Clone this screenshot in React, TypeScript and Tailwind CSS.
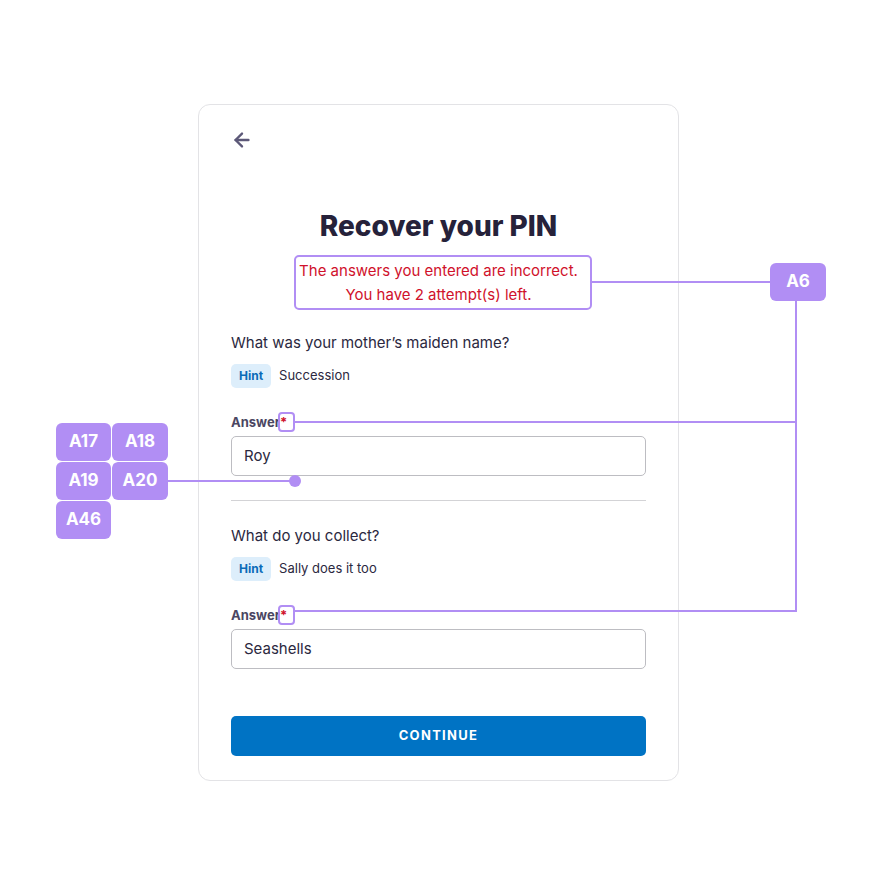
import { ArrowLeft } from 'lucide-react';

const font = { fontFamily: 'Inter, "Liberation Sans", sans-serif' };

function Question({ question, hint, value }: { question: string; hint: string; value: string }) {
  return (
    <div className="flex flex-col">
      <p className="text-[15px] leading-5 text-[#2b2840]">{question}</p>
      <div className="mt-[11px] flex items-center gap-2">
        <span className="flex h-6 items-center rounded-[5px] bg-[#ddeefb] px-2 text-[12px] font-bold text-[#0b6bb8]">Hint</span>
        <span className="text-[13px] text-[#2b2840]">{hint}</span>
      </div>
      <label className="mt-[25px] block text-[13px] font-bold leading-[18px] text-[#4b4662]">
        Answer<span className="text-[#d0112b]">*</span>
      </label>
      <div className="mt-[5px] flex h-10 items-center rounded-[5px] border border-[#bdbdc2] px-3 text-[15px] text-[#2b2840]">
        {value}
      </div>
    </div>
  );
}

function Badge({ label, className }: { label: string; className: string }) {
  return (
    <div className={`absolute flex h-[38px] items-center justify-center rounded-[6px] bg-[#b18ef4] text-[17px] font-bold text-white ${className}`}>
      {label}
    </div>
  );
}

// annotation layer drawn over the form
function Annotations() {
  return (
    <div className="pointer-events-none absolute inset-0">
      <div className="absolute left-[294px] top-[255px] h-[55px] w-[298px] rounded-[5px] border-2 border-[#b18ef4]" />
      <div className="absolute left-[592px] top-[281px] h-[2px] w-[178px] bg-[#b18ef4]" />
      <Badge label="A6" className="left-[770px] top-[263px] w-[56px]" />
      <div className="absolute left-[795px] top-[301px] h-[311px] w-[2px] bg-[#b18ef4]" />
      <div className="absolute left-[278px] top-[412px] h-[20px] w-[17px] rounded-[4px] border-2 border-[#b18ef4]" />
      <div className="absolute left-[295px] top-[421px] h-[2px] w-[501px] bg-[#b18ef4]" />
      <div className="absolute left-[278px] top-[605px] h-[20px] w-[17px] rounded-[4px] border-2 border-[#b18ef4]" />
      <div className="absolute left-[295px] top-[610px] h-[2px] w-[501px] bg-[#b18ef4]" />
      <Badge label="A17" className="left-[56px] top-[423px] w-[55px]" />
      <Badge label="A18" className="left-[112px] top-[423px] w-[56px]" />
      <Badge label="A19" className="left-[56px] top-[462px] w-[55px]" />
      <Badge label="A20" className="left-[112px] top-[462px] w-[56px]" />
      <Badge label="A46" className="left-[56px] top-[501px] w-[55px]" />
      <svg className="absolute left-[107px] top-[457px]" width="10" height="10" viewBox="0 0 10 10">
        <path d="M5 0 L6 4 L10 5 L6 6 L5 10 L4 6 L0 5 L4 4 Z" fill="white" />
      </svg>
      <div className="absolute left-[168px] top-[480px] h-[2px] w-[127px] bg-[#b18ef4]" />
      <div className="absolute left-[289px] top-[475px] h-3 w-3 rounded-full bg-[#b18ef4]" />
    </div>
  );
}

export default function App() {
  return (
    <div className="relative min-h-[883px] w-full bg-white pt-[104px]" style={font}>
      <div className="mx-auto flex w-[481px] flex-col rounded-[12px] border border-[#e3e3e6] bg-white px-8 pb-6 pt-[24px]">
        <ArrowLeft className="block h-[22px] w-[22px] text-[#5c5878]" strokeWidth={2.6} />
        <h1 className="mt-[57px] text-center text-[28px] font-extrabold leading-9 text-[#26223a]">Recover your PIN</h1>
        <p className="mt-[15px] text-center text-[15px] leading-6 text-[#d0112b]">
          The answers you entered are incorrect.
          <br />
          You have 2 attempt(s) left.
        </p>
        <div className="mt-[26px]">
          <Question question="What was your mother’s maiden name?" hint="Succession" value="Roy" />
        </div>
        <div className="mt-6 h-px bg-[#d3d3d6]" />
        <div className="mt-[25px]">
          <Question question="What do you collect?" hint="Sally does it too" value="Seashells" />
        </div>
        <button className="mt-[47px] flex h-10 w-full items-center justify-center rounded-[5px] bg-[#0073c4] text-[13px] font-bold tracking-[0.1em] text-white">
          CONTINUE
        </button>
      </div>
      <Annotations />
    </div>
  );
}
